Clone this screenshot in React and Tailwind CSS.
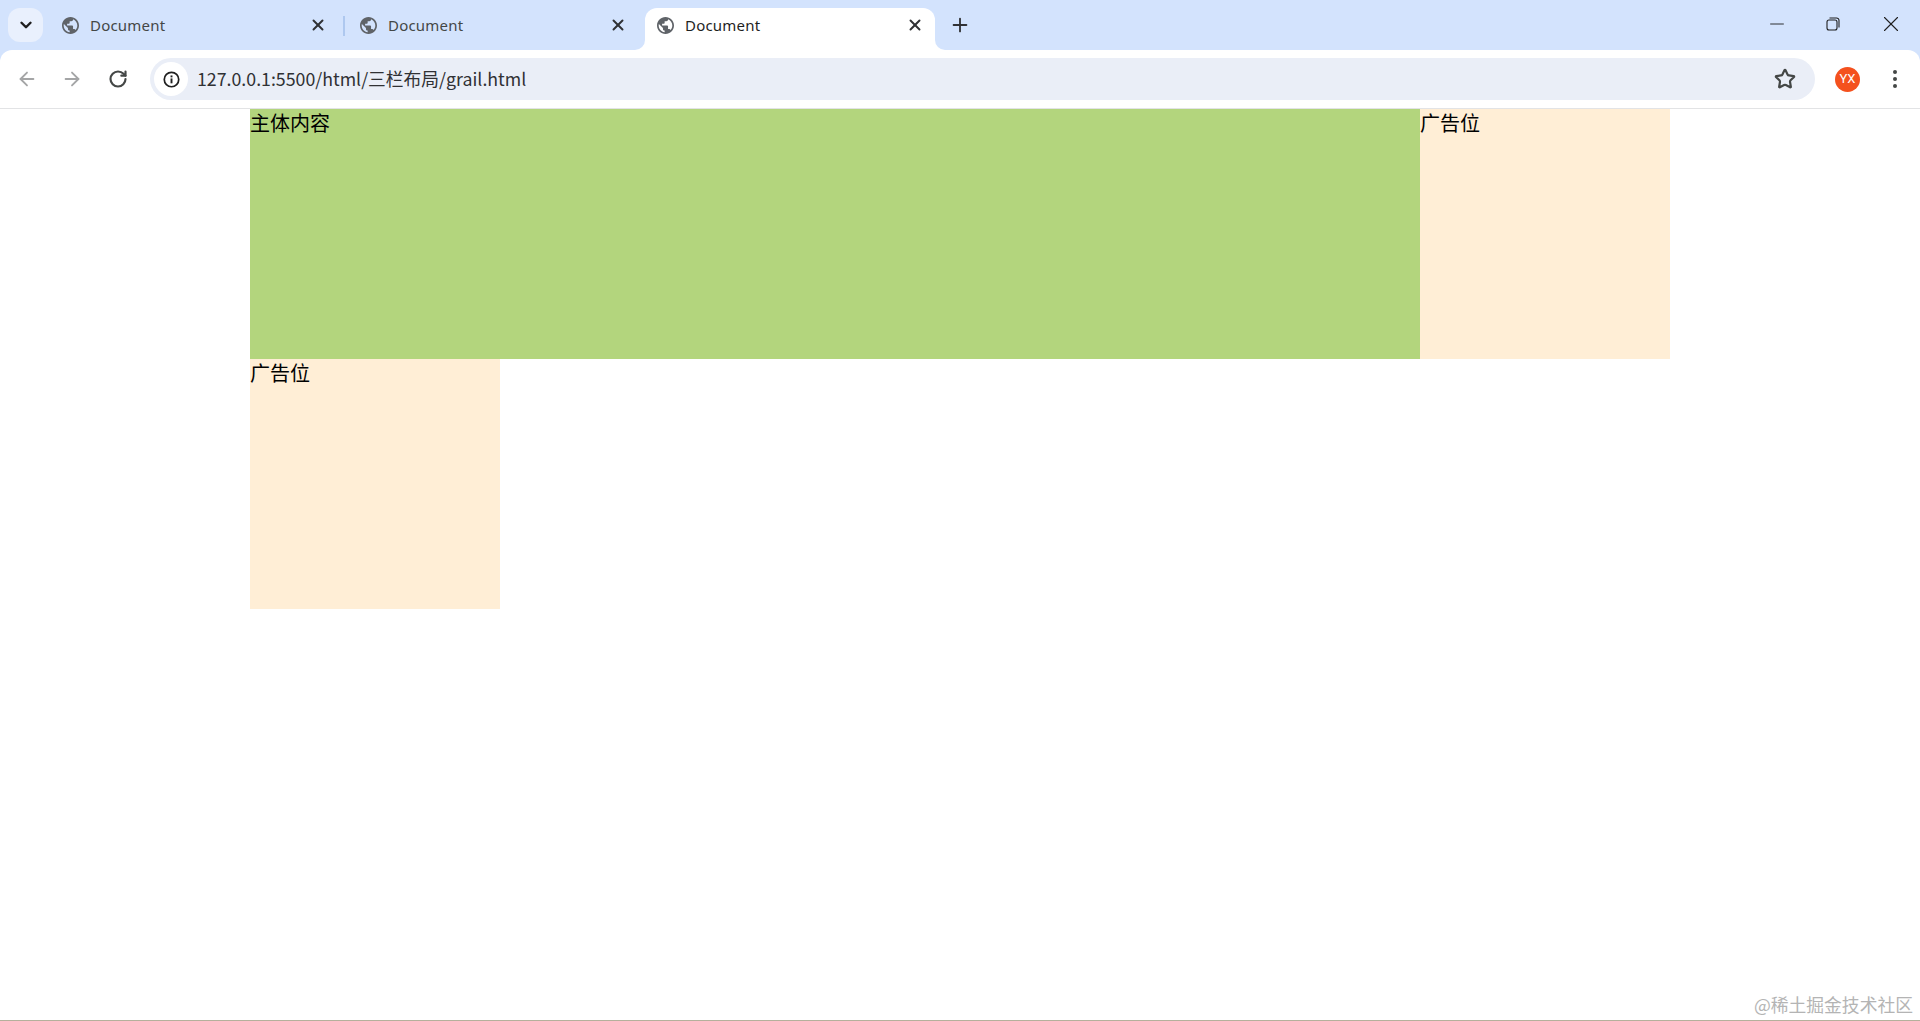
import { ArrowLeft, ArrowRight, RotateCw, Star, X, Plus, ChevronDown, Minus } from 'lucide-react';

const CJK = 'font-["Noto_Sans_CJK_SC","Liberation_Sans",sans-serif]';

function Globe() {
  return (
    <svg viewBox="2 2 20 20" className="w-[17px] h-[17px] shrink-0 fill-[#5f6368]">
      <path d="M12 2C6.48 2 2 6.48 2 12s4.48 10 10 10 10-4.48 10-10S17.52 2 12 2zm-1 17.93c-3.95-.49-7-3.85-7-7.93 0-.62.08-1.21.21-1.79L9 15v1c0 1.1.9 2 2 2v1.93zm6.9-2.54c-.26-.81-1-1.39-1.9-1.39h-1v-3c0-.55-.45-1-1-1H8v-2h2c.55 0 1-.45 1-1V7h2c1.1 0 2-.9 2-2v-.41c2.93 1.19 5 4.06 5 7.41 0 2.08-.8 3.97-2.1 5.39z" />
    </svg>
  );
}

function Tab({ className, closeClass, active }) {
  return (
    <div className={`relative flex items-center h-[42px] pb-[8px] shrink-0 ${className}`}>
      <Globe />
      <span className={`ml-[11px] text-[15px] tracking-[0.2px] font-["Noto_Sans",sans-serif] ${active ? 'text-[#1f1f1f]' : 'text-[#444746]'}`}>Document</span>
      <X className={`absolute top-[8px] w-[18px] h-[18px] text-[#303134] ${closeClass}`} strokeWidth={2.6} />
      {active && (
        <>
          <span className="absolute bottom-0 left-[-10px] w-[10px] h-[10px] bg-white">
            <span className="block w-full h-full bg-[#d3e3fd] rounded-br-[10px]" />
          </span>
          <span className="absolute bottom-0 right-[-10px] w-[10px] h-[10px] bg-white">
            <span className="block w-full h-full bg-[#d3e3fd] rounded-bl-[10px]" />
          </span>
        </>
      )}
    </div>
  );
}

function TabStrip() {
  return (
    <div className="flex items-end h-[50px] bg-[#d3e3fd] pl-[8px]">
      <div className="w-[35px] h-[34px] mb-[8px] rounded-[12px] bg-[#e9f0fd] flex items-center justify-center">
        <ChevronDown className="w-[18px] h-[18px] text-[#1f1f1f]" strokeWidth={3.2} />
      </div>
      <Tab className="w-[298px] ml-[2px] pl-[17px]" closeClass="right-[16px]" />
      <div className="w-[2px] h-[20px] mb-[14px] bg-[#aec8ef]" />
      <Tab className="w-[298px] pl-[15px]" closeClass="right-[16px]" />
      <Tab active className="w-[290px] ml-[2px] pl-[12px] bg-white rounded-t-[12px]" closeClass="right-[11px]" />
      <div className="flex items-center h-[42px] pb-[8px] ml-[14px]">
        <Plus className="w-[22px] h-[22px] text-[#303134]" strokeWidth={2} />
      </div>
      <div className="flex items-center ml-auto h-[50px] pb-[2px] text-[#1f1f1f]">
        <Minus className="w-[22px] h-[22px]" strokeWidth={1} />
        <svg viewBox="0 0 14 14" className="w-[14px] h-[14px] ml-[38px] fill-none stroke-[#1f1f1f] stroke-[1.1]">
          <rect x="1" y="3" width="10" height="10" rx="2" />
          <path d="M3.5 1h7a2.5 2.5 0 0 1 2.5 2.5v7" />
        </svg>
        <X className="w-[26px] h-[26px] ml-[38px] mr-[16px]" strokeWidth={1} />
      </div>
    </div>
  );
}

function Toolbar() {
  return (
    <div className="flex items-center h-[59px] bg-[#d3e3fd] border-b border-[#e2e3e5]">
      <div className="flex items-center w-full h-full bg-white rounded-t-[12px] pl-[16px] pr-[19px]">
        <ArrowLeft className="w-[22px] h-[22px] text-[#a4a5a6]" strokeWidth={2} />
        <ArrowRight className="w-[22px] h-[22px] ml-[23px] text-[#a4a5a6]" strokeWidth={2} />
        <RotateCw className="w-[20px] h-[20px] ml-[25px] text-[#444746]" strokeWidth={2.6} />
        <div className="flex items-center h-[42px] w-[1665px] ml-[22px] rounded-full bg-[#eaeef7] pl-[4px] pr-[19px]">
          <div className="flex items-center justify-center w-[34px] h-[34px] rounded-full bg-white">
            <svg viewBox="0 0 16 16" className="w-[17px] h-[17px]">
              <circle cx="8" cy="8" r="6.8" fill="none" stroke="#1f1f1f" strokeWidth="1.6" />
              <rect x="7.1" y="7" width="1.8" height="4.6" fill="#1f1f1f" />
              <rect x="7.1" y="4.2" width="1.8" height="1.8" fill="#1f1f1f" />
            </svg>
          </div>
          <span className={`ml-[9px] pb-[1px] text-[17.75px] text-[#303134] ${CJK}`}>127.0.0.1:5500/html/三栏布局/grail.html</span>
          <Star className="w-[22px] h-[22px] ml-auto text-[#444746]" strokeWidth={2.4} />
        </div>
        <div className="flex items-center justify-center w-[25px] h-[25px] ml-[20px] rounded-full bg-[#f4511e] text-[13px] text-white font-['Roboto',sans-serif]">YX</div>
        <div className="flex flex-col gap-[3px] ml-[33px]">
          <span className="w-[4px] h-[4px] rounded-full bg-[#444746]" />
          <span className="w-[4px] h-[4px] rounded-full bg-[#444746]" />
          <span className="w-[4px] h-[4px] rounded-full bg-[#444746]" />
        </div>
      </div>
    </div>
  );
}

function Grail() {
  return (
    <div className={`w-[1420px] ml-[250px] text-[20px] leading-[28px] text-black ${CJK}`}>
      <div className="flex h-[250px]">
        <div className="w-[1170px] bg-[#b3d57d]">主体内容</div>
        <div className="w-[250px] bg-[#ffeed6]">广告位</div>
      </div>
      <div className="w-[250px] h-[250px] bg-[#ffeed6]">广告位</div>
    </div>
  );
}

export default function App() {
  return (
    <div className="relative h-screen overflow-hidden bg-white border-b border-[#b5b09c]">
      <TabStrip />
      <Toolbar />
      <Grail />
      <span className={`absolute right-[7px] bottom-[4px] text-[17.8px] leading-[24px] text-[#b4b4b4] ${CJK}`}>@稀土掘金技术社区</span>
    </div>
  );
}
